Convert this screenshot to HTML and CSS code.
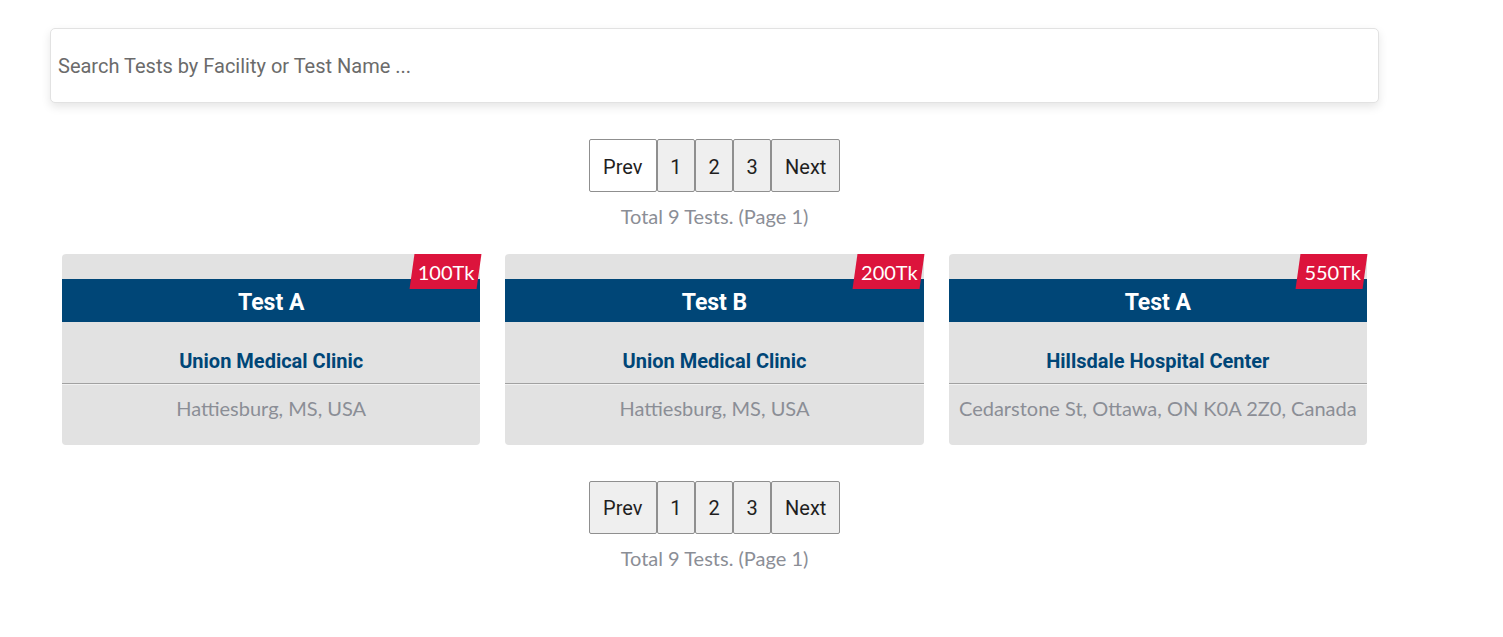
FILE: index.html
```html
<!DOCTYPE html>
<html>
<head>
<meta charset="utf-8">
<link rel="stylesheet" href="styles.css">
</head>
<body>
<div class="container">
  <div class="search">
    <input class="search-input" type="text" placeholder="Search Tests by Facility or Test Name ...">
  </div>

  <div class="pager">
    <div class="pager-buttons">
      <button class="pg pg-prev pg-white">Prev</button>
      <button class="pg">1</button>
      <button class="pg">2</button>
      <button class="pg">3</button>
      <button class="pg pg-next">Next</button>
    </div>
    <div class="pager-total">Total 9 Tests. (Page 1)</div>
  </div>

  <div class="cards">
    <div class="card">
      <div class="price"><span class="price-text">100Tk</span></div>
      <div class="card-title">Test A</div>
      <div class="card-facility">Union Medical Clinic</div>
      <div class="card-address">Hattiesburg, MS, USA</div>
    </div>
    <div class="card">
      <div class="price"><span class="price-text">200Tk</span></div>
      <div class="card-title">Test B</div>
      <div class="card-facility">Union Medical Clinic</div>
      <div class="card-address">Hattiesburg, MS, USA</div>
    </div>
    <div class="card">
      <div class="price"><span class="price-text">550Tk</span></div>
      <div class="card-title">Test A</div>
      <div class="card-facility">Hillsdale Hospital Center</div>
      <div class="card-address">Cedarstone St, Ottawa, ON K0A 2Z0, Canada</div>
    </div>
  </div>

  <div class="pager pager-bottom">
    <div class="pager-buttons">
      <button class="pg pg-prev">Prev</button>
      <button class="pg">1</button>
      <button class="pg">2</button>
      <button class="pg">3</button>
      <button class="pg pg-next">Next</button>
    </div>
    <div class="pager-total">Total 9 Tests. (Page 1)</div>
  </div>
</div>
</body>
</html>
```
FILE: styles.css
```css
* { box-sizing: border-box; }
html, body { margin: 0; padding: 0; background: #fff; }
body { font-family: Roboto, "Liberation Sans", sans-serif; }

.container {
  width: 1329px;
  margin-left: 50px;
  padding-top: 28px;
}

.search {
  height: 75px;
  border: 1px solid #e2e2e2;
  border-radius: 5px;
  box-shadow: 0 4px 10px rgba(0,0,0,0.10);
  background: #fff;
  display: flex;
  align-items: center;
}
.search-input {
  width: 100%;
  height: 100%;
  border: none;
  outline: none;
  background: transparent;
  font-family: Roboto, sans-serif;
  font-size: 20px;
  padding: 1px 7px 0;
  color: #333;
}
.search-input::placeholder { color: #6b6b6b; }

.pager {
  display: flex;
  flex-direction: column;
  align-items: center;
  margin-top: 36px;
}
.pager-bottom { margin-top: 36px; }
.pager-buttons { display: flex; }
.pg {
  height: 53px;
  padding: 2px 12.4px 0;
  border: 1px solid #8f8f8f;
  background: #efefef;
  border-radius: 2px;
  font-family: Roboto, sans-serif;
  font-size: 20px;
  color: #1f1f1f;
  margin: 0;
}
.pg-prev { padding-left: 13.5px; padding-right: 13.5px; }
.pg-next { padding-left: 13px; padding-right: 13px; }
.pg-white { background: #fff; }
.pager-total {
  margin-top: 12px;
  font-family: Lato, sans-serif;
  font-size: 20px;
  color: #8b8e96;
  line-height: 24px;
}

.cards {
  display: grid;
  grid-template-columns: repeat(3, 1fr);
  column-gap: 25px;
  padding: 0 12px;
  margin-top: 25.5px;
}
.card {
  position: relative;
  background: #e2e2e2;
  border-radius: 4px;
  padding-top: 25px;
  height: 191px;
  text-align: center;
}
.price {
  position: absolute;
  top: 0;
  right: 2px;
  height: 35px;
  padding: 0 4px 0 6px;
  z-index: 1;
}
.price::before {
  content: "";
  position: absolute;
  inset: 0;
  background: #dc143c;
  transform: skewX(-8deg);
}
.price-text {
  position: relative;
  color: #fff;
  font-family: Lato, sans-serif;
  font-size: 20px;
  line-height: 37px;
}
.card-title {
  background: #004677;
  color: #fff;
  height: 43px;
  line-height: 47px;
  font-size: 23px;
  font-weight: 700;
}
.card-facility {
  height: 62px;
  padding-top: 27.5px;
  font-size: 20px;
  font-weight: 700;
  color: #004677;
  line-height: 24px;
  border-bottom: 1px solid #a1a1a1;
  box-shadow: 0 1px 0 #f1f1f1;
}
.card-address {
  padding-top: 12px;
  font-family: Lato, sans-serif;
  font-size: 20px;
  color: #8b8e96;
  line-height: 24px;
}
```
